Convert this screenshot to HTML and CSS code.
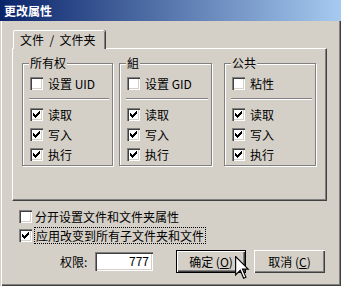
FILE: index.html
```html
<!DOCTYPE html>
<html lang="zh-CN">
<head>
  <meta charset="UTF-8" />
  <title>更改属性</title>
  <link rel="stylesheet" href="styles.css">
</head>
<body>

<div class="window">
  <div class="titlebar">更改属性</div>

  <div class="body">
    <div class="tabs">
      <div class="tab">文件  /  文件夹</div>
    </div>

    <div class="pane">
      <fieldset class="group g1">
        <legend>所有权</legend>
        <div class="row"><span class="cb"></span>设置 UID</div>
        <div class="sep"></div>
        <div class="row"><span class="cb"><svg viewBox="0 0 13 13"><path d="M3 5h1v3H3zM4 6h1v3H4zM5 7h1v3H5zM6 6h1v3H6zM7 5h1v3H7zM8 4h1v3H8zM9 3h1v3H9z"/></svg></span>读取</div>
        <div class="row"><span class="cb"><svg viewBox="0 0 13 13"><path d="M3 5h1v3H3zM4 6h1v3H4zM5 7h1v3H5zM6 6h1v3H6zM7 5h1v3H7zM8 4h1v3H8zM9 3h1v3H9z"/></svg></span>写入</div>
        <div class="row"><span class="cb"><svg viewBox="0 0 13 13"><path d="M3 5h1v3H3zM4 6h1v3H4zM5 7h1v3H5zM6 6h1v3H6zM7 5h1v3H7zM8 4h1v3H8zM9 3h1v3H9z"/></svg></span>执行</div>
      </fieldset>

      <fieldset class="group g2">
        <legend>組</legend>
        <div class="row"><span class="cb"></span>设置 GID</div>
        <div class="sep"></div>
        <div class="row"><span class="cb"><svg viewBox="0 0 13 13"><path d="M3 5h1v3H3zM4 6h1v3H4zM5 7h1v3H5zM6 6h1v3H6zM7 5h1v3H7zM8 4h1v3H8zM9 3h1v3H9z"/></svg></span>读取</div>
        <div class="row"><span class="cb"><svg viewBox="0 0 13 13"><path d="M3 5h1v3H3zM4 6h1v3H4zM5 7h1v3H5zM6 6h1v3H6zM7 5h1v3H7zM8 4h1v3H8zM9 3h1v3H9z"/></svg></span>写入</div>
        <div class="row"><span class="cb"><svg viewBox="0 0 13 13"><path d="M3 5h1v3H3zM4 6h1v3H4zM5 7h1v3H5zM6 6h1v3H6zM7 5h1v3H7zM8 4h1v3H8zM9 3h1v3H9z"/></svg></span>执行</div>
      </fieldset>

      <fieldset class="group g3">
        <legend>公共</legend>
        <div class="row"><span class="cb"></span>粘性</div>
        <div class="sep"></div>
        <div class="row"><span class="cb"><svg viewBox="0 0 13 13"><path d="M3 5h1v3H3zM4 6h1v3H4zM5 7h1v3H5zM6 6h1v3H6zM7 5h1v3H7zM8 4h1v3H8zM9 3h1v3H9z"/></svg></span>读取</div>
        <div class="row"><span class="cb"><svg viewBox="0 0 13 13"><path d="M3 5h1v3H3zM4 6h1v3H4zM5 7h1v3H5zM6 6h1v3H6zM7 5h1v3H7zM8 4h1v3H8zM9 3h1v3H9z"/></svg></span>写入</div>
        <div class="row"><span class="cb"><svg viewBox="0 0 13 13"><path d="M3 5h1v3H3zM4 6h1v3H4zM5 7h1v3H5zM6 6h1v3H6zM7 5h1v3H7zM8 4h1v3H8zM9 3h1v3H9z"/></svg></span>执行</div>
      </fieldset>
    </div>

    <div class="options">
      <div class="row"><span class="cb"></span>分开设置文件和文件夹属性</div>
      <div class="row"><span class="cb"><svg viewBox="0 0 13 13"><path d="M3 5h1v3H3zM4 6h1v3H4zM5 7h1v3H5zM6 6h1v3H6zM7 5h1v3H7zM8 4h1v3H8zM9 3h1v3H9z"/></svg></span><span class="focus">应用改变到所有子文件夹和文件</span></div>
    </div>

    <div class="actions">
      <span class="perm-label">权限:</span>
      <div class="field">777</div>
      <button class="btn default">确定 (<u>O</u>)</button>
      <button class="btn">取消 (<u>C</u>)</button>
    </div>
  </div>

  <svg class="cursor" width="15" height="24" viewBox="0 0 13 21">
    <path d="M0.5 0.5V16.5L4.5 12.5L7.5 19.5L9.5 18.5L6.5 11.5H11.5Z" fill="#fff" stroke="#000" stroke-width="1"/>
  </svg>
</div>

</body>
</html>
```

FILE: styles.css
```css
* { margin: 0; padding: 0; box-sizing: border-box; }
body {
  width: 341px;
  height: 286px;
  overflow: hidden;
  background: #d4d0c8;
  font-family: "Noto Sans CJK SC", "Noto Sans", sans-serif;
  font-size: 12px;
  color: #000;
}

.window {
  position: relative;
  width: 341px;
  height: 286px;
  padding: 0 2px 2px 2px;
  background: #d4d0c8;
  box-shadow: inset 1px 0 #d4d0c8, inset 2px 0 #fff, inset -1px -1px #404040, inset -2px -2px #808080;
}

.titlebar {
  height: 21px;
  margin: 0 -2px;
  padding: 0 4px;
  line-height: 22px;
  font-weight: bold;
  color: #fff;
  background: linear-gradient(to right, #0a246a, #a6caf0);
}

.body { padding-top: 9px; }

.tabs {
  display: flex;
  padding-left: 11px;
}
.tab {
  position: relative;
  z-index: 1;
  width: 92px;
  height: 19px;
  margin-bottom: -1px;
  padding-left: 6px;
  line-height: 18px;
  white-space: pre;
  background: #d4d0c8;
  border-top: 1px solid #fff;
  border-left: 1px solid #fff;
  border-top-left-radius: 2px;
  border-top-right-radius: 2px;
  box-shadow: inset -1px 0 #808080, 1px 0 #404040;
}

.pane {
  display: flex;
  align-items: flex-start;
  width: 315px;
  height: 153px;
  margin-left: 10px;
  padding: 7px 0 0 9px;
  border-top: 1px solid #fff;
  border-left: 1px solid #fff;
  box-shadow: inset -1px -1px #808080;
  border-right: 1px solid #404040;
  border-bottom: 1px solid #404040;
}

.group {
  min-width: 0;
  padding: 7px 0 4px 0;
  border: 1px solid #808080;
  box-shadow: inset 1px 1px #fff, 1px 1px #fff;
}
.group legend {
  margin-left: 6px;
  padding: 0 1px;
  line-height: 14px;
  background: #d4d0c8;
}
.g1 { width: 91px; }
.g2 { width: 93px; margin-left: 6px; }
.g3 { width: 92px; margin-left: 12px; }

.row {
  display: flex;
  align-items: center;
  gap: 5px;
  height: 13px;
  line-height: 13px;
  padding-left: 7px;
  white-space: nowrap;
}
.group .row + .row { margin-top: 7px; }

.sep {
  height: 2px;
  margin: 8px 3px 8px 6px;
  border-top: 1px solid #808080;
  border-bottom: 1px solid #fff;
}

.cb {
  flex: none;
  width: 13px;
  height: 13px;
  background: #fff;
  box-shadow: inset 1px 1px #808080, inset 2px 2px #404040, inset -1px -1px #fff, inset -2px -2px #d4d0c8;
}
.cb svg { display: block; width: 13px; height: 13px; }

.options {
  display: flex;
  flex-direction: column;
  gap: 6px;
  margin-top: 9px;
}
.options .row { padding-left: 17px; }
.options .row .cb { margin-right: -2px; }
.focus {
  padding: 1px 1px;
  outline: 1px dotted #000;
  outline-offset: 0;
}

.actions {
  display: flex;
  align-items: center;
  height: 23px;
  margin-top: 8px;
  padding-left: 58px;
}
.perm-label { width: 35px; }
.field {
  width: 58px;
  height: 19px;
  padding: 0 4px;
  line-height: 18px;
  text-align: right;
  background: #fff;
  box-shadow: inset 1px 1px #808080, inset 2px 2px #404040, inset -1px -1px #fff, inset -2px -2px #d4d0c8;
}

.btn {
  height: 23px;
  font: inherit;
  color: #000;
  background: #d4d0c8;
  border: none;
  box-shadow: inset 1px 1px #fff, inset -1px -1px #404040, inset -2px -2px #808080;
}
.btn.default {
  width: 70px;
  margin-left: 23px;
  border: 1px solid #000;
}
.btn + .btn { width: 71px; margin-left: 8px; }

.cursor {
  position: absolute;
  left: 235px;
  top: 256px;
}
```
